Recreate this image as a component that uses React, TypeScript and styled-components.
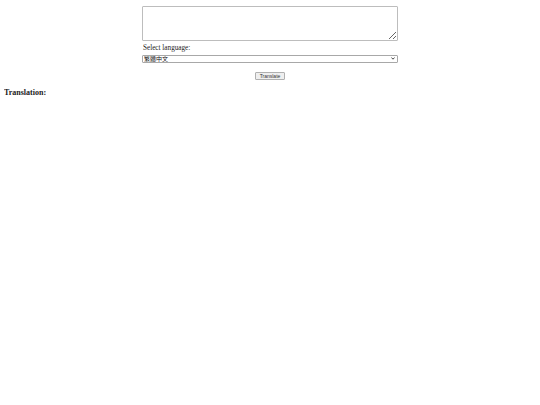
import React from "react";
import styled, { createGlobalStyle } from "styled-components";

const Global = createGlobalStyle`
  html, body { margin: 0; padding: 0; background: #fff; }
  body { margin: 4px; font-family: "Liberation Serif", "Times New Roman", serif; font-size: 8px; color: #000; }
`;

const Form = styled.div`
  width: 256px;
  margin: 2px auto 0;
  display: flex;
  flex-direction: column;
`;

const TextArea = styled.textarea`
  box-sizing: border-box;
  width: 256px;
  height: 35px;
  border: 1px solid #bdbdbd;
  border-radius: 1px;
  resize: vertical;
  margin: 0;
  padding: 1px;
  font-size: 8px;
  outline: none;
`;

const Label = styled.label`
  margin-top: 2px;
  padding-left: 1px;
  font-size: 7.2px;
  line-height: 10px;
  color: #222;
`;

const SelectWrap = styled.div`
  position: relative;
  margin-top: 2px;
  width: 256px;
  height: 8px;
`;

const Select = styled.select`
  appearance: none;
  -webkit-appearance: none;
  box-sizing: border-box;
  display: block;
  width: 256px;
  height: 8px;
  margin: 0;
  font-size: 6px;
  padding: 0 1px;
  border: 1px solid #a8a8a8;
  border-radius: 1px;
  background: #fff;
  color: #111;
  font-family: "Noto Sans CJK TC", "Liberation Sans", sans-serif;
  line-height: 6px;
  outline: none;
`;

const Chevron = styled.svg`
  position: absolute;
  right: 3px;
  top: 2px;
  width: 4px;
  height: 3px;
  pointer-events: none;
`;

const ButtonRow = styled.div`
  display: flex;
  justify-content: center;
  margin-top: 9px;
`;

const Button = styled.button`
  box-sizing: border-box;
  height: 8px;
  width: 30px;
  padding: 0;
  font-size: 5px;
  font-family: "Liberation Sans", Arial, sans-serif;
  color: #333;
  border: 1px solid #b0b0b0;
  border-radius: 1px;
  background: #efefef;
  line-height: 6px;
`;

const Heading = styled.h3`
  margin: 8px 0 0;
  font-size: 8px;
  font-weight: bold;
  color: #222;
`;

export default function App() {
  return (
    <>
      <Global />
      <Form>
        <TextArea />
        <Label>Select language:</Label>
        <SelectWrap>
          <Select defaultValue="zh-TW">
            <option value="zh-TW">繁體中文</option>
            <option value="en">English</option>
          </Select>
          <Chevron viewBox="0 0 4 3">
            <path d="M0.4 0.5 L2 2.2 L3.6 0.5" fill="none" stroke="#333" strokeWidth="0.9" />
          </Chevron>
        </SelectWrap>
        <ButtonRow>
          <Button>Translate</Button>
        </ButtonRow>
      </Form>
      <Heading>Translation:</Heading>
    </>
  );
}
